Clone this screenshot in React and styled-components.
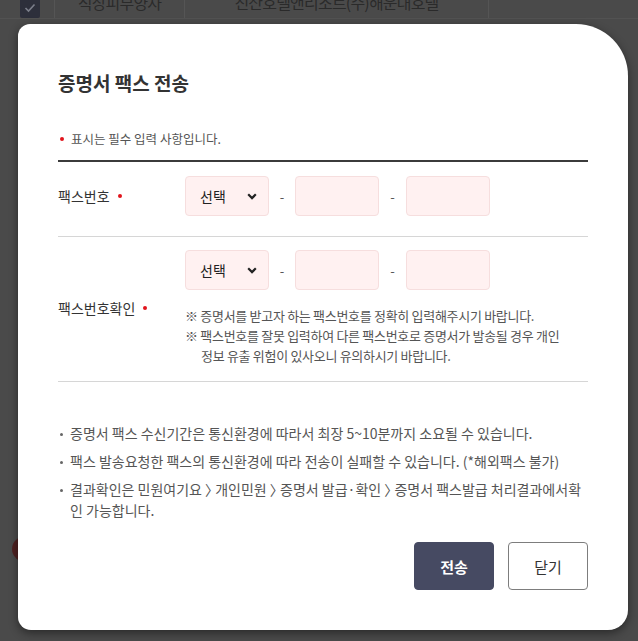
import React from 'react';
import styled, { createGlobalStyle } from 'styled-components';

const GlobalStyle = createGlobalStyle`
    * { box-sizing: border-box; }
    html, body {
        margin: 0;
        padding: 0;
        background: #4a4a4a;
        font-family: "Noto Sans CJK KR", "Noto Sans", sans-serif;
    }
`;

const Page = styled.div`
    position: relative;
    width: 638px;
    height: 641px;
    overflow: hidden;
    background: #4a4a4a;
`;

const BgRow = styled.div`
    display: flex;
    align-items: center;
    height: 34px;
    margin-top: -15px;
    border-bottom: 1px solid #525252;
    color: #2a2a2a;
    font-size: 16px;
    letter-spacing: -0.8px;
`;

const BgCell = styled.div`
    display: flex;
    align-items: center;
    justify-content: center;
    width: ${p => p.w}px;
    height: 100%;
    border-right: 1px solid #555;
`;

const BgCheck = styled.span`
    display: flex;
    align-items: center;
    justify-content: center;
    width: 20px;
    height: 20px;
    margin-left: 5px;
    margin-top: 12px;
    background: #2d2f3b;
    border-radius: 2px;
`;

const BgBadge = styled.span`
    position: absolute;
    left: 12px;
    top: 536px;
    width: 28px;
    height: 26px;
    border-radius: 50%;
    background: #4e2121;
`;

const Modal = styled.section`
    position: absolute;
    left: 18px;
    top: 24px;
    width: 610px;
    padding: 47px 40px 40px;
    background: #fff;
    border-radius: 12px 52px 20px 13px;
    box-shadow: 0 3px 10px rgba(0, 0, 0, 0.45);
`;

const Title = styled.h2`
    margin: 0;
    font-size: 19px;
    line-height: 24px;
    font-weight: 700;
    color: #333;
`;

const Required = styled.p`
    display: flex;
    align-items: center;
    margin: 35px 0 12px;
    font-size: 12.5px;
    line-height: 18px;
    color: #555;
`;

const Dot = styled.i`
    display: inline-block;
    width: 4px;
    height: 4px;
    margin: ${p => p.after ? '0 0 0 8px' : '0 7px 0 2px'};
    border-radius: 50%;
    background: #e1141c;
`;

const Form = styled.div`
    border-top: 2px solid #3b3b3b;
`;

const Row = styled.div`
    display: flex;
    align-items: center;
    padding: ${p => p.pad};
    border-bottom: 1px solid #d6d6d6;
`;

const Label = styled.div`
    display: flex;
    align-items: center;
    width: 127px;
    flex-shrink: 0;
    font-size: 14px;
    color: #333;
`;

const Field = styled.div`
    display: flex;
    flex-direction: column;
`;

const PhoneGroup = styled.div`
    display: flex;
    align-items: center;
`;

const Select = styled.select`
    appearance: none;
    width: 84px;
    height: 40px;
    padding: 0 0 0 14px;
    border: 1px solid #f6dede;
    border-radius: 4px;
    background: #fff1f1 url("data:image/svg+xml,%3Csvg xmlns='http://www.w3.org/2000/svg' width='10' height='7' viewBox='0 0 10 7'%3E%3Cpath d='M1.2 1.3 5 5.1 8.8 1.3' fill='none' stroke='%23222' stroke-width='2.2'/%3E%3C/svg%3E") no-repeat right 11px center;
    font-family: inherit;
    font-size: 14px;
    color: #222;
`;

const Input = styled.input`
    width: 84px;
    height: 40px;
    border: 1px solid #f6dede;
    border-radius: 4px;
    background: #fff1f1;
`;

const Dash = styled.span`
    width: ${p => p.w}px;
    text-align: center;
    font-size: 13px;
    color: #555;
`;

const Notes = styled.ul`
    width: 396px;
    margin: 16px 0 0;
    padding: 0;
    list-style: none;
    font-size: 13px;
    line-height: 20px;
    color: #555;
    letter-spacing: -0.3px;
    word-break: keep-all;
`;

const Note = styled.li`
    padding-left: 16px;
    text-indent: -16px;
`;

const Guide = styled.ul`
    margin: 41px 0 0;
    padding: 0;
    list-style: none;
    display: flex;
    flex-direction: column;
    gap: 7px;
`;

const GuideItem = styled.li`
    position: relative;
    width: 524px;
    padding-left: 12px;
    font-size: 14px;
    line-height: 21px;
    color: #555;
    word-break: break-all;
    font-feature-settings: "halt";

    &::before {
        content: '';
        position: absolute;
        left: 2px;
        top: 10px;
        width: 3px;
        height: 3px;
        border-radius: 50%;
        background: #666;
    }
`;

const Buttons = styled.div`
    display: flex;
    justify-content: flex-end;
    gap: 14px;
    margin-top: 21px;
`;

const Button = styled.button`
    width: 80px;
    height: 48px;
    border-radius: 4px;
    border: 1px solid ${p => p.primary ? '#464a62' : '#7d7d7d'};
    background: ${p => p.primary ? '#464a62' : '#fff'};
    color: ${p => p.primary ? '#fff' : '#333'};
    font-family: inherit;
    font-size: 15px;
    font-weight: ${p => p.primary ? 700 : 400};
`;

function PhoneInputs() {
    return (
        <PhoneGroup>
            <Select defaultValue="">
                <option value="">선택</option>
            </Select>
            <Dash w={26}>-</Dash>
            <Input />
            <Dash w={27}>-</Dash>
            <Input />
        </PhoneGroup>
    );
}

export default function App() {
    return (
        <Page>
            <GlobalStyle />
            <BgRow>
                <BgCell w={55}>
                    <BgCheck>
                        <svg width="12" height="10" viewBox="0 0 12 10">
                            <path d="M1.5 5 4.5 8 10.5 1.5" fill="none" stroke="#7b7e8a" strokeWidth="1.6" />
                        </svg>
                    </BgCheck>
                </BgCell>
                <BgCell w={130}>직장피부양자</BgCell>
                <BgCell w={304}>진산호텔앤리조트(주)해운대호텔</BgCell>
            </BgRow>
            <BgBadge />

            <Modal>
                <Title>증명서 팩스 전송</Title>
                <Required><Dot />표시는 필수 입력 사항입니다.</Required>
                <Form>
                    <Row pad="14px 0 20px">
                        <Label>팩스번호<Dot after /></Label>
                        <PhoneInputs />
                    </Row>
                    <Row pad="13px 0 15px">
                        <Label>팩스번호확인<Dot after /></Label>
                        <Field>
                            <PhoneInputs />
                            <Notes>
                                <Note>※ 증명서를 받고자 하는 팩스번호를 정확히 입력해주시기 바랍니다.</Note>
                                <Note>※ 팩스번호를 잘못 입력하여 다른 팩스번호로 증명서가 발송될 경우 개인 정보 유출 위험이 있사오니 유의하시기 바랍니다.</Note>
                            </Notes>
                        </Field>
                    </Row>
                </Form>
                <Guide>
                    <GuideItem>증명서 팩스 수신기간은 통신환경에 따라서 최장 5~10분까지 소요될 수 있습니다.</GuideItem>
                    <GuideItem>팩스 발송요청한 팩스의 통신환경에 따라 전송이 실패할 수 있습니다. (*해외팩스 불가)</GuideItem>
                    <GuideItem>결과확인은 민원여기요 〉 개인민원 〉 증명서 발급·확인 〉 증명서 팩스발급 처리결과에서확인 가능합니다.</GuideItem>
                </Guide>
                <Buttons>
                    <Button primary>전송</Button>
                    <Button>닫기</Button>
                </Buttons>
            </Modal>
        </Page>
    );
}
